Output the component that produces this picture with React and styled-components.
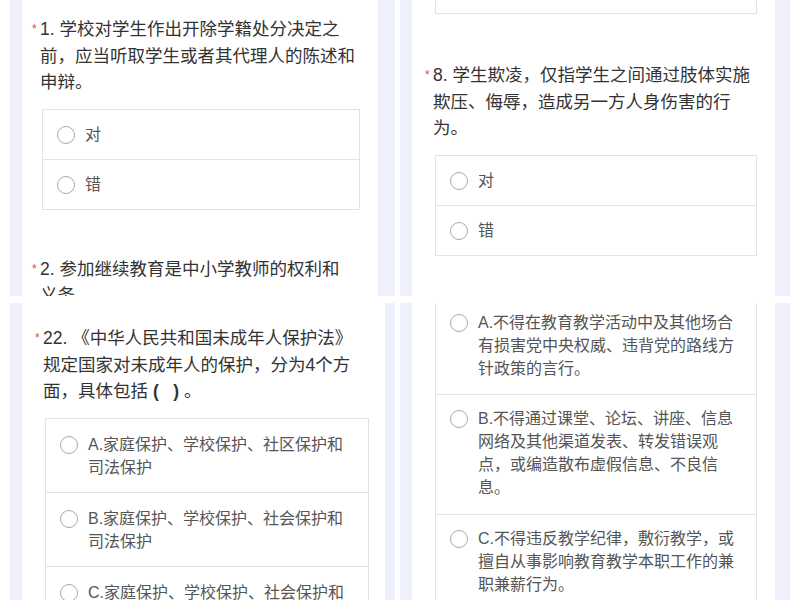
import React from "react";
import styled, { createGlobalStyle } from "styled-components";

const G = createGlobalStyle`
  body { margin: 0; background: #fff; font-family: "Liberation Sans", "Noto Sans CJK SC", sans-serif; }
`;
const Grid = styled.div`
  display: grid; grid-template-columns: 385px 390px; grid-template-rows: 296px 297px;
  column-gap: 5px; row-gap: 7px; padding-left: 10px; width: 800px; height: 600px; overflow: hidden;
`;
const Tile = styled.div`
  display: flex; overflow: hidden; height: 100%;
`;
const Strip = styled.div`width: ${p => p.w}px; background: #eef1fb; flex-shrink: 0;`;
const Content = styled.div`
  flex: 1; background: #fff; overflow: hidden; padding: ${p => p.pad};
`;
const Q = styled.div`
  font-size: 17.5px; line-height: 26.5px; color: #333; padding-left: 8px; position: relative; margin-bottom: 13px;
  width: ${p => p.w}px;
`;
const Star = styled.span`
  position: absolute; left: 0; top: 0; color: #e74c3c; font-size: 12px;
`;
const Bold = styled.span`font-weight: bold; white-space: pre;`;
const Box = styled.div`
  border: 1px solid #e3e3e3; margin-left: ${p => p.ml}px; width: ${p => p.w}px;
  ${p => p.noTop && "border-top: none;"}
`;
const Row = styled.div`
  display: flex; align-items: flex-start; gap: 10px; padding: ${p => p.pad || "13px 14px"};
  & + & { border-top: 1px solid #e3e3e3; }
`;
const Radio = styled.span`
  width: 18px; height: 18px; border: 1.5px solid #aaa; border-radius: 50%; flex-shrink: 0; margin-top: 3px; box-sizing: border-box;
`;
const Opt = styled.div`font-size: 16px; line-height: 23px; color: #555;`;
const Gap = styled.div`height: ${p => p.h}px;`;

export default function App() {
  return (
    <Grid>
      <G />
      <Tile>
        <Strip w={12} />
        <Content pad="16px 10px 0 10px">
          <Q w={316}><Star>*</Star>1. 学校对学生作出开除学籍处分决定之前，应当听取学生或者其代理人的陈述和申辩。</Q>
          <Box ml={10} w={316}>
            <Row><Radio /><Opt>对</Opt></Row>
            <Row><Radio /><Opt>错</Opt></Row>
          </Box>
          <Gap h={46} />
          <Q w={316}><Star>*</Star>2. 参加继续教育是中小学教师的权利和义务。</Q>
        </Content>
        <Strip w={17} />
      </Tile>
      <Tile>
        <Strip w={12} />
        <Content pad="0 10px 0 13px">
          <Box ml={10} w={320} noTop style={{ height: 13 }} />
          <Gap h={48} />
          <Q w={330}><Star>*</Star>8. 学生欺凌，仅指学生之间通过肢体实施欺压、侮辱，造成另一方人身伤害的行为。</Q>
          <Box ml={10} w={320}>
            <Row><Radio /><Opt>对</Opt></Row>
            <Row><Radio /><Opt>错</Opt></Row>
          </Box>
        </Content>
        <Strip w={15} />
      </Tile>
      <Tile>
        <Strip w={12} />
        <Content pad="22px 6px 0 13px">
          <Q w={325}><Star>*</Star>22. 《中华人民共和国未成年人保护法》规定国家对未成年人的保护，分为4个方面，具体包括 <Bold>(   )</Bold> 。</Q>
          <Box ml={10} w={322}>
            <Row pad="14px 14px 13px"><Radio /><Opt>A.家庭保护、学校保护、社区保护和司法保护</Opt></Row>
            <Row pad="14px 14px 13px"><Radio /><Opt>B.家庭保护、学校保护、社会保护和司法保护</Opt></Row>
            <Row pad="14px 14px 13px"><Radio /><Opt>C.家庭保护、学校保护、社会保护和司法保护</Opt></Row>
          </Box>
        </Content>
        <Strip w={10} />
      </Tile>
      <Tile>
        <Strip w={12} />
        <Content pad="0 10px 0 10px">
          <Box ml={13} w={320} noTop>
            <Row pad="8px 14px 14px"><Radio /><Opt>A.不得在教育教学活动中及其他场合有损害党中央权威、违背党的路线方针政策的言行。</Opt></Row>
            <Row pad="12px 14px 15px"><Radio /><Opt>B.不得通过课堂、论坛、讲座、信息网络及其他渠道发表、转发错误观点，或编造散布虚假信息、不良信息。</Opt></Row>
            <Row pad="12px 14px 14px"><Radio /><Opt>C.不得违反教学纪律，敷衍教学，或擅自从事影响教育教学本职工作的兼职兼薪行为。</Opt></Row>
          </Box>
        </Content>
        <Strip w={15} />
      </Tile>
    </Grid>
  );
}
